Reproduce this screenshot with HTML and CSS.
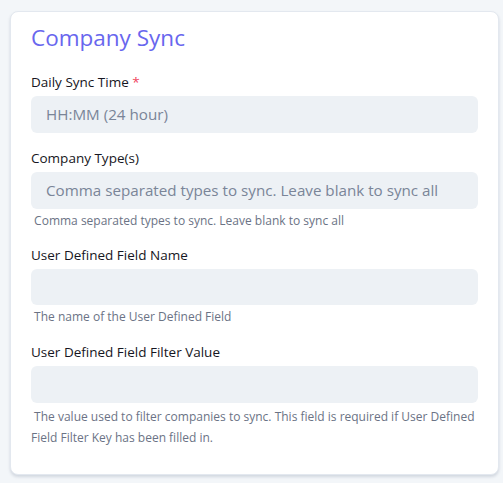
FILE: index.html
```html
<!DOCTYPE html>
<html lang="en">
<head>
<meta charset="utf-8">
<title>Company Sync</title>
<link rel="stylesheet" href="styles.css">
</head>
<body>
<div class="card">
  <h2 class="title">Company Sync</h2>
  <div class="group g1">
    <label class="label">Daily Sync Time <span class="req">*</span></label>
    <input class="input" type="text" placeholder="HH:MM (24 hour)">
  </div>
  <div class="group">
    <label class="label">Company Type(s)</label>
    <input class="input" type="text" placeholder="Comma separated types to sync. Leave blank to sync all">
    <div class="help">&nbsp;Comma separated types to sync. Leave blank to sync all</div>
  </div>
  <div class="group g3">
    <label class="label">User Defined Field Name</label>
    <input class="input" type="text">
    <div class="help">&nbsp;The name of the User Defined Field</div>
  </div>
  <div class="group last">
    <label class="label">User Defined Field Filter Value</label>
    <input class="input" type="text">
    <div class="help">&nbsp;The value used to filter companies to sync. This field is required if User Defined Field Filter Key has been filled in.</div>
  </div>
</div>
</body>
</html>
```
FILE: styles.css
```css
* { box-sizing: border-box; }
html, body { margin: 0; padding: 0; }
body {
  background: #f3f6f9;
  font-family: "Open Sans", "DejaVu Sans", sans-serif;
  padding: 11px 4px 9px 10px;
}
.card {
  background: #ffffff;
  border: 1px solid #e3e8ef;
  border-radius: 8px;
  box-shadow: 0 2px 3px rgba(60, 80, 110, 0.18);
  padding: 12px 20px 28px 20px;
  height: 464px;
}
.title {
  margin: 0 0 20px 0;
  font-size: 22.5px;
  line-height: 28px;
  font-weight: 500;
  color: #6866ee;
}
.group {
  display: flex;
  flex-direction: column;
  margin-bottom: 14px;
}
.group.g1 { margin-bottom: 15.5px; }
.group.g3 { margin-bottom: 15px; }
.group.last { margin-bottom: 0; }
.label {
  font-size: 13.5px;
  line-height: 20px;
  color: #161622;
  font-weight: 500;
  margin-bottom: 4px;
}
.req { color: #f0445c; }
.input {
  height: 36.5px;
  border: none;
  border-radius: 6px;
  background: #edf1f5;
  padding: 0 15px;
  font-family: inherit;
  font-size: 15.2px;
  color: #333;
  outline: none;
  width: 100%;
}
.input::placeholder { color: #7a8598; }
.help {
  font-size: 12px;
  line-height: 21px;
  color: #6b7385;
  margin-top: 1px;
}
.last .help { margin-top: 3px; }
```
